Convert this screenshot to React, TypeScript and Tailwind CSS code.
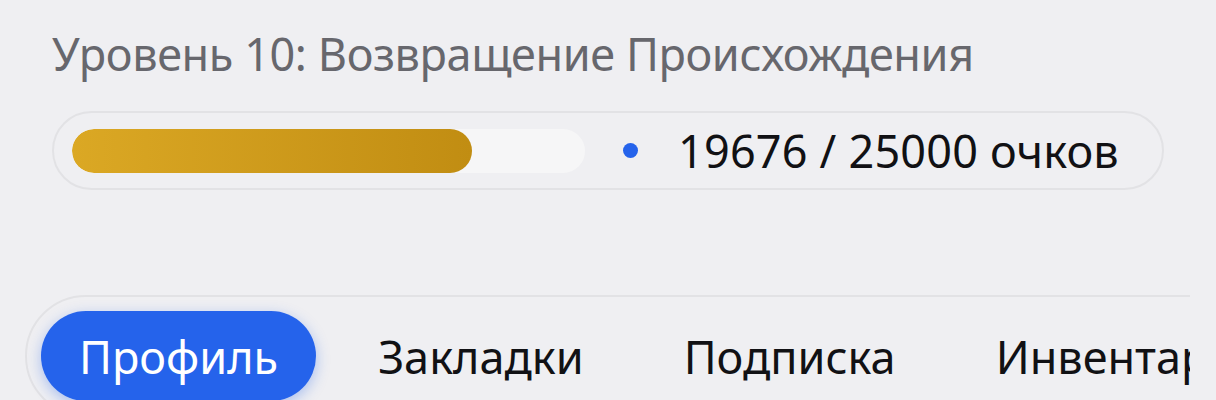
const tabs = ["Профиль", "Закладки", "Подписка", "Инвентарь", "Настройки"];

const App = () => {
  const current = 19676;
  const total = 25000;
  const pct = (current / total) * 100 * 0.99;

  return (
    <div
      className="w-[1216px] h-[400px] overflow-hidden bg-[#efeff2]"
      style={{ fontFamily: '"Noto Sans", "DejaVu Sans", sans-serif' }}
    >
      <div className="pl-[52px] pr-[52px] pt-[31px]">
        <h2 className="text-[45px] leading-[46px] font-normal text-[#67676d] tracking-[-0.4px] whitespace-nowrap">
          Уровень 10: Возвращение Происхождения
        </h2>

        <div className="mt-[34px] h-[79px] w-[1112px] rounded-full border-2 border-[#e2e2e5] flex items-center pl-[18px] pr-[30px]">
          <div className="w-[513px] h-[44px] rounded-full bg-[#f6f6f7] overflow-hidden shrink-0">
            <div
              className="h-full rounded-full bg-gradient-to-r from-[#dba824] to-[#c18d12]"
              style={{ width: `${pct}%` }}
            />
          </div>
          <span className="ml-[38px] w-[15px] h-[15px] rounded-full bg-[#2563eb] shrink-0" />
          <span className="ml-[40px] text-[45px] leading-[46px] text-[#111114] whitespace-nowrap tracking-[0.2px]">
            {current} / {total} очков
          </span>
        </div>
      </div>

      <div className="mt-[105px] ml-[25px] w-[1165px] overflow-hidden">
        <div className="w-max rounded-full border-2 border-[#e2e2e5] p-[14px] flex gap-[24px]">
          {tabs.map((t, i) => (
            <button
              key={t}
              className={
                i === 0
                  ? "h-[90px] px-[38px] rounded-full bg-[#2563eb] text-white text-[45px] leading-[45px] shadow-[0_4px_14px_rgba(37,99,235,0.35)]"
                  : "h-[90px] px-[38px] rounded-full text-[#111114] text-[45px] leading-[45px]"
              }
            >
              {t}
            </button>
          ))}
        </div>
      </div>
    </div>
  );
};

export default App;
